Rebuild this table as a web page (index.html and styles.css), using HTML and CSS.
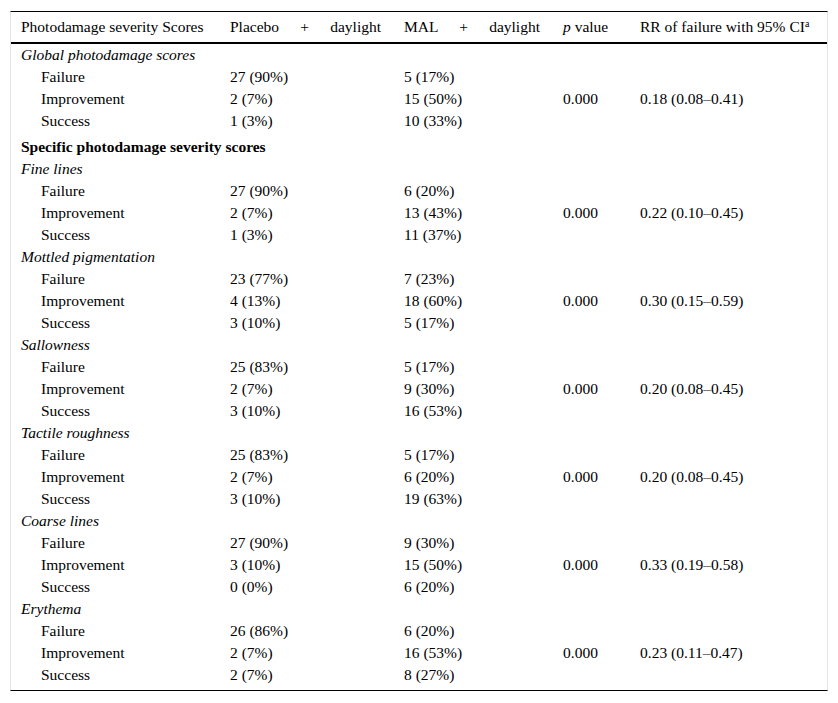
FILE: index.html
```html
<!DOCTYPE html>
<html>
<head>
<meta charset="utf-8">
<link rel="stylesheet" href="styles.css">
</head>
<body>
<div class="frame">
<table class="tbl">
<colgroup><col class="c1"><col class="c2"><col class="c3"><col class="c4"><col class="c5"></colgroup>
<thead>
<tr>
<th>Photodamage severity Scores</th>
<th class="just">Placebo + daylight</th>
<th class="just">MAL + daylight</th>
<th><i>p</i> value</th>
<th>RR of failure with 95% CI<sup>a</sup></th>
</tr>
</thead>
<tbody>
<tr><td class="sec">Global photodamage scores</td><td></td><td></td><td></td><td></td></tr>
<tr><td class="ind">Failure</td><td>27 (90%)</td><td>5 (17%)</td><td></td><td></td></tr>
<tr><td class="ind">Improvement</td><td>2 (7%)</td><td>15 (50%)</td><td>0.000</td><td>0.18 (0.08–0.41)</td></tr>
<tr><td class="ind">Success</td><td>1 (3%)</td><td>10 (33%)</td><td></td><td></td></tr>
<tr class="bold-row"><td colspan="5"><b>Specific photodamage severity scores</b></td></tr>
<tr><td class="sec">Fine lines</td><td></td><td></td><td></td><td></td></tr>
<tr><td class="ind">Failure</td><td>27 (90%)</td><td>6 (20%)</td><td></td><td></td></tr>
<tr><td class="ind">Improvement</td><td>2 (7%)</td><td>13 (43%)</td><td>0.000</td><td>0.22 (0.10–0.45)</td></tr>
<tr><td class="ind">Success</td><td>1 (3%)</td><td>11 (37%)</td><td></td><td></td></tr>
<tr><td class="sec">Mottled pigmentation</td><td></td><td></td><td></td><td></td></tr>
<tr><td class="ind">Failure</td><td>23 (77%)</td><td>7 (23%)</td><td></td><td></td></tr>
<tr><td class="ind">Improvement</td><td>4 (13%)</td><td>18 (60%)</td><td>0.000</td><td>0.30 (0.15–0.59)</td></tr>
<tr><td class="ind">Success</td><td>3 (10%)</td><td>5 (17%)</td><td></td><td></td></tr>
<tr><td class="sec">Sallowness</td><td></td><td></td><td></td><td></td></tr>
<tr><td class="ind">Failure</td><td>25 (83%)</td><td>5 (17%)</td><td></td><td></td></tr>
<tr><td class="ind">Improvement</td><td>2 (7%)</td><td>9 (30%)</td><td>0.000</td><td>0.20 (0.08–0.45)</td></tr>
<tr><td class="ind">Success</td><td>3 (10%)</td><td>16 (53%)</td><td></td><td></td></tr>
<tr><td class="sec">Tactile roughness</td><td></td><td></td><td></td><td></td></tr>
<tr><td class="ind">Failure</td><td>25 (83%)</td><td>5 (17%)</td><td></td><td></td></tr>
<tr><td class="ind">Improvement</td><td>2 (7%)</td><td>6 (20%)</td><td>0.000</td><td>0.20 (0.08–0.45)</td></tr>
<tr><td class="ind">Success</td><td>3 (10%)</td><td>19 (63%)</td><td></td><td></td></tr>
<tr><td class="sec">Coarse lines</td><td></td><td></td><td></td><td></td></tr>
<tr><td class="ind">Failure</td><td>27 (90%)</td><td>9 (30%)</td><td></td><td></td></tr>
<tr><td class="ind">Improvement</td><td>3 (10%)</td><td>15 (50%)</td><td>0.000</td><td>0.33 (0.19–0.58)</td></tr>
<tr><td class="ind">Success</td><td>0 (0%)</td><td>6 (20%)</td><td></td><td></td></tr>
<tr><td class="sec">Erythema</td><td></td><td></td><td></td><td></td></tr>
<tr><td class="ind">Failure</td><td>26 (86%)</td><td>6 (20%)</td><td></td><td></td></tr>
<tr><td class="ind">Improvement</td><td>2 (7%)</td><td>16 (53%)</td><td>0.000</td><td>0.23 (0.11–0.47)</td></tr>
<tr><td class="ind">Success</td><td>2 (7%)</td><td>8 (27%)</td><td></td><td></td></tr>
</tbody>
</table>
</div>
</body>
</html>
```

FILE: styles.css
```css
html, body {
  margin: 0;
  padding: 0;
  background: #fff;
}
body {
  padding: 11px 10px 0 10px;
  font-family: "Liberation Serif", "Times New Roman", serif;
  font-size: 15.5px;
  color: #000;
}
.frame {
  width: 816px;
  border-top: 1px solid #000;
  border-bottom: 1px solid #000;
  border-left: 1px solid #e4e4e4;
  border-right: 1px solid #e4e4e4;
  padding-bottom: 4px;
}
.tbl {
  width: 816px;
  table-layout: fixed;
  border-collapse: collapse;
}
.c1 { width: 219px; }
.c2 { width: 174px; }
.c3 { width: 159px; }
.c4 { width: 77px; }
.c5 { width: 187px; }
.tbl th {
  font-weight: normal;
  text-align: left;
  height: 30px;
  padding: 0 23px 0 0;
  vertical-align: middle;
  border-bottom: 2px solid #000;
  white-space: nowrap;
  line-height: 30px;
}
.tbl th:first-child { padding-left: 10px; }
.tbl th:last-child { padding-right: 0; }
.tbl th.just {
  text-align: justify;
  text-align-last: justify;
}
.tbl sup {
  font-size: 10px;
  line-height: 0;
  vertical-align: 5px;
}
.tbl td {
  height: 22px;
  padding: 0;
  line-height: 22px;
  white-space: nowrap;
  vertical-align: middle;
}
.tbl td:first-child { padding-left: 10px; }
.tbl td.sec { font-style: italic; }
.tbl td.ind { padding-left: 30px; }
.bold-row td {
  height: 22px;
  padding-top: 4px;
  vertical-align: top;
}
```
